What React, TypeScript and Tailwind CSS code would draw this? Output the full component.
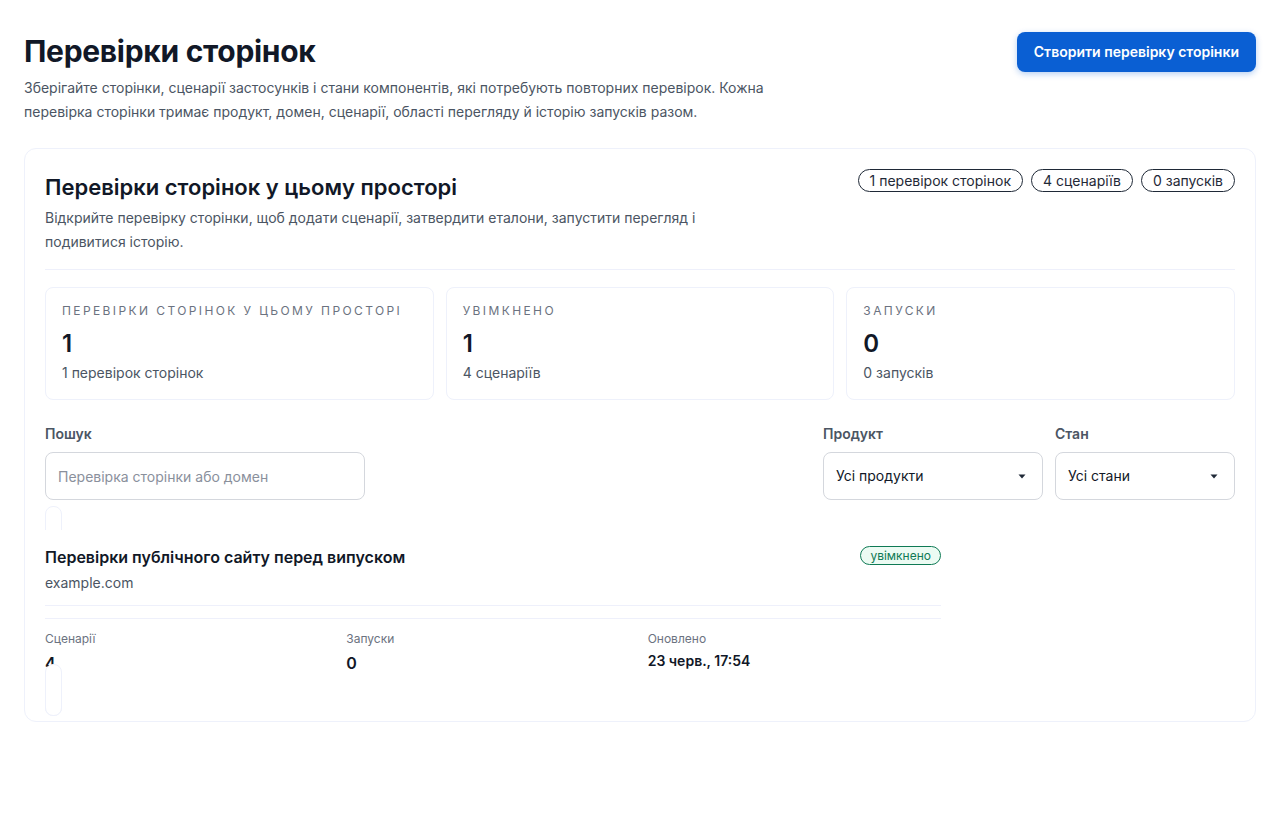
import type React from 'react';

const pills = ['1 перевірок сторінок', '4 сценаріїв', '0 запусків'];

const stats = [
  { label: 'Перевірки сторінок у цьому просторі', value: '1', sub: '1 перевірок сторінок' },
  { label: 'Увімкнено', value: '1', sub: '4 сценаріїв' },
  { label: 'Запуски', value: '0', sub: '0 запусків' },
];

const Caret: React.FC = () => (
  <svg width="8" height="5" viewBox="0 0 8 5" className="shrink-0">
    <path d="M0.5 0.5h7L4 4.5z" fill="#1f2937" />
  </svg>
);

const SelectBox: React.FC<{ label: string; value: string; width: string }> = ({
  label,
  value,
  width,
}) => (
  <div className={`flex flex-col gap-2 ${width}`}>
    <span className="text-sm font-semibold leading-5 text-[#4b5563]">{label}</span>
    <div className="flex h-12 items-center justify-between rounded-lg border border-[#d4d7dd] bg-white pl-3 pr-4 text-sm text-[#111827]">
      <span>{value}</span>
      <Caret />
    </div>
  </div>
);

const PageCheckItem: React.FC = () => (
  <div className="relative h-[210px] w-[17px] rounded-lg border border-[#eef1fb] bg-white">
    {/* item content spills out of the collapsed card */}
    <div className="absolute left-[-1px] top-[23px] w-[896px] bg-white">
      <div className="flex items-start justify-between pt-[15px]">
        <h3 className="text-base font-semibold leading-6 text-[#111827]">
          Перевірки публічного сайту перед випуском
        </h3>
        <span className="mt-[1px] flex h-[19px] items-center rounded-full border border-[#0f7a55] bg-[#ecfbf3] px-[9px] text-xs text-[#0f7a55]">
          увімкнено
        </span>
      </div>
      <p className="mt-1 text-sm leading-5 text-[#4b5563]">example.com</p>
      <div className="mt-3 border-t border-[#eef0fb]" />
      <div className="mt-3 grid grid-cols-3 gap-2 border-t border-[#eef0fb] pt-3">
        <div>
          <div className="text-xs leading-4 text-[#6b7280]">Сценарії</div>
          <div className="mt-[4px] text-base font-semibold leading-6 text-[#111827]">4</div>
        </div>
        <div>
          <div className="text-xs leading-4 text-[#6b7280]">Запуски</div>
          <div className="mt-[4px] text-base font-semibold leading-6 text-[#111827]">0</div>
        </div>
        <div>
          <div className="text-xs leading-4 text-[#6b7280]">Оновлено</div>
          <div className="mt-[2px] text-sm font-semibold leading-6 text-[#111827]">
            23 черв., 17:54
          </div>
        </div>
      </div>
    </div>
    <div className="absolute bottom-[-1px] left-[-1px] z-10 h-[52px] w-[17px] rounded-lg border border-[#eef1fb] bg-white" />
  </div>
);

const App: React.FC = () => {
  return (
    <div
      className="min-h-screen bg-white px-6 pt-8 text-[#111827]"
      style={{ fontFamily: 'Inter, "Noto Sans", sans-serif' }}
    >
      {/* Page header */}
      <div className="flex items-start justify-between">
        <div>
          <h1 className="mt-[1px] text-3xl font-bold leading-9 tracking-[-0.01em] text-[#111827]">
            Перевірки сторінок
          </h1>
          <p className="mt-[7px] max-w-[740px] text-sm leading-6 text-[#4b5563]">
            Зберігайте сторінки, сценарії застосунків і стани компонентів, які потребують
            повторних перевірок. Кожна перевірка сторінки тримає продукт, домен, сценарії,
            області перегляду й історію запусків разом.
          </p>
        </div>
        <button className="h-10 rounded-lg bg-[#0a5fd3] px-[17px] text-sm font-semibold text-white shadow-[0_2px_6px_rgba(10,95,211,0.3)]">
          Створити перевірку сторінки
        </button>
      </div>

      {/* Main card */}
      <section className="mt-[24px] h-[574px] rounded-xl border border-[#eef1fb] bg-white px-5 pt-5">
        <div className="flex items-start justify-between">
          <div>
            <h2 className="mt-[2px] text-[22px] font-semibold leading-8 text-[#111827]">
              Перевірки сторінок у цьому просторі
            </h2>
            <p className="mt-[3px] max-w-[680px] text-sm leading-6 text-[#4b5563]">
              Відкрийте перевірку сторінки, щоб додати сценарії, затвердити еталони, запустити
              перегляд і подивитися історію.
            </p>
          </div>
          <div className="flex gap-2">
            {pills.map((p) => (
              <span
                key={p}
                className="flex h-[23px] items-center rounded-full border border-[#1f2937] px-[11px] text-sm text-[#1f2937]"
              >
                {p}
              </span>
            ))}
          </div>
        </div>

        <div className="mt-[15px] border-t border-[#eef0fb]" />

        {/* Stats */}
        <div className="mt-[17px] grid grid-cols-3 gap-3">
          {stats.map((s) => (
            <div
              key={s.label}
              className="h-[113px] rounded-lg border border-[#eef1fb] bg-white px-4 pt-[15px]"
            >
              <div className="text-xs uppercase leading-4 tracking-[0.2em] text-[#6b7280]">
                {s.label}
              </div>
              <div className="mt-[11px] text-2xl font-semibold leading-7 text-[#111827]">
                {s.value}
              </div>
              <div className="mt-[5px] text-sm leading-5 text-[#4b5563]">{s.sub}</div>
            </div>
          ))}
        </div>

        {/* Filters */}
        <div className="mt-[24px] flex items-end justify-between">
          <div className="flex w-[320px] flex-col gap-2">
            <span className="text-sm font-semibold leading-5 text-[#4b5563]">Пошук</span>
            <input
              placeholder="Перевірка сторінки або домен"
              className="h-12 rounded-lg border border-[#d4d7dd] bg-white px-3 text-sm text-[#111827] placeholder:text-[#8a909c] focus:outline-none"
            />
          </div>
          <div className="flex gap-3">
            <SelectBox label="Продукт" value="Усі продукти" width="w-[220px]" />
            <SelectBox label="Стан" value="Усі стани" width="w-[180px]" />
          </div>
        </div>

        <div className="mt-[6px]">
          <PageCheckItem />
        </div>
      </section>
    </div>
  );
};

export default App;
